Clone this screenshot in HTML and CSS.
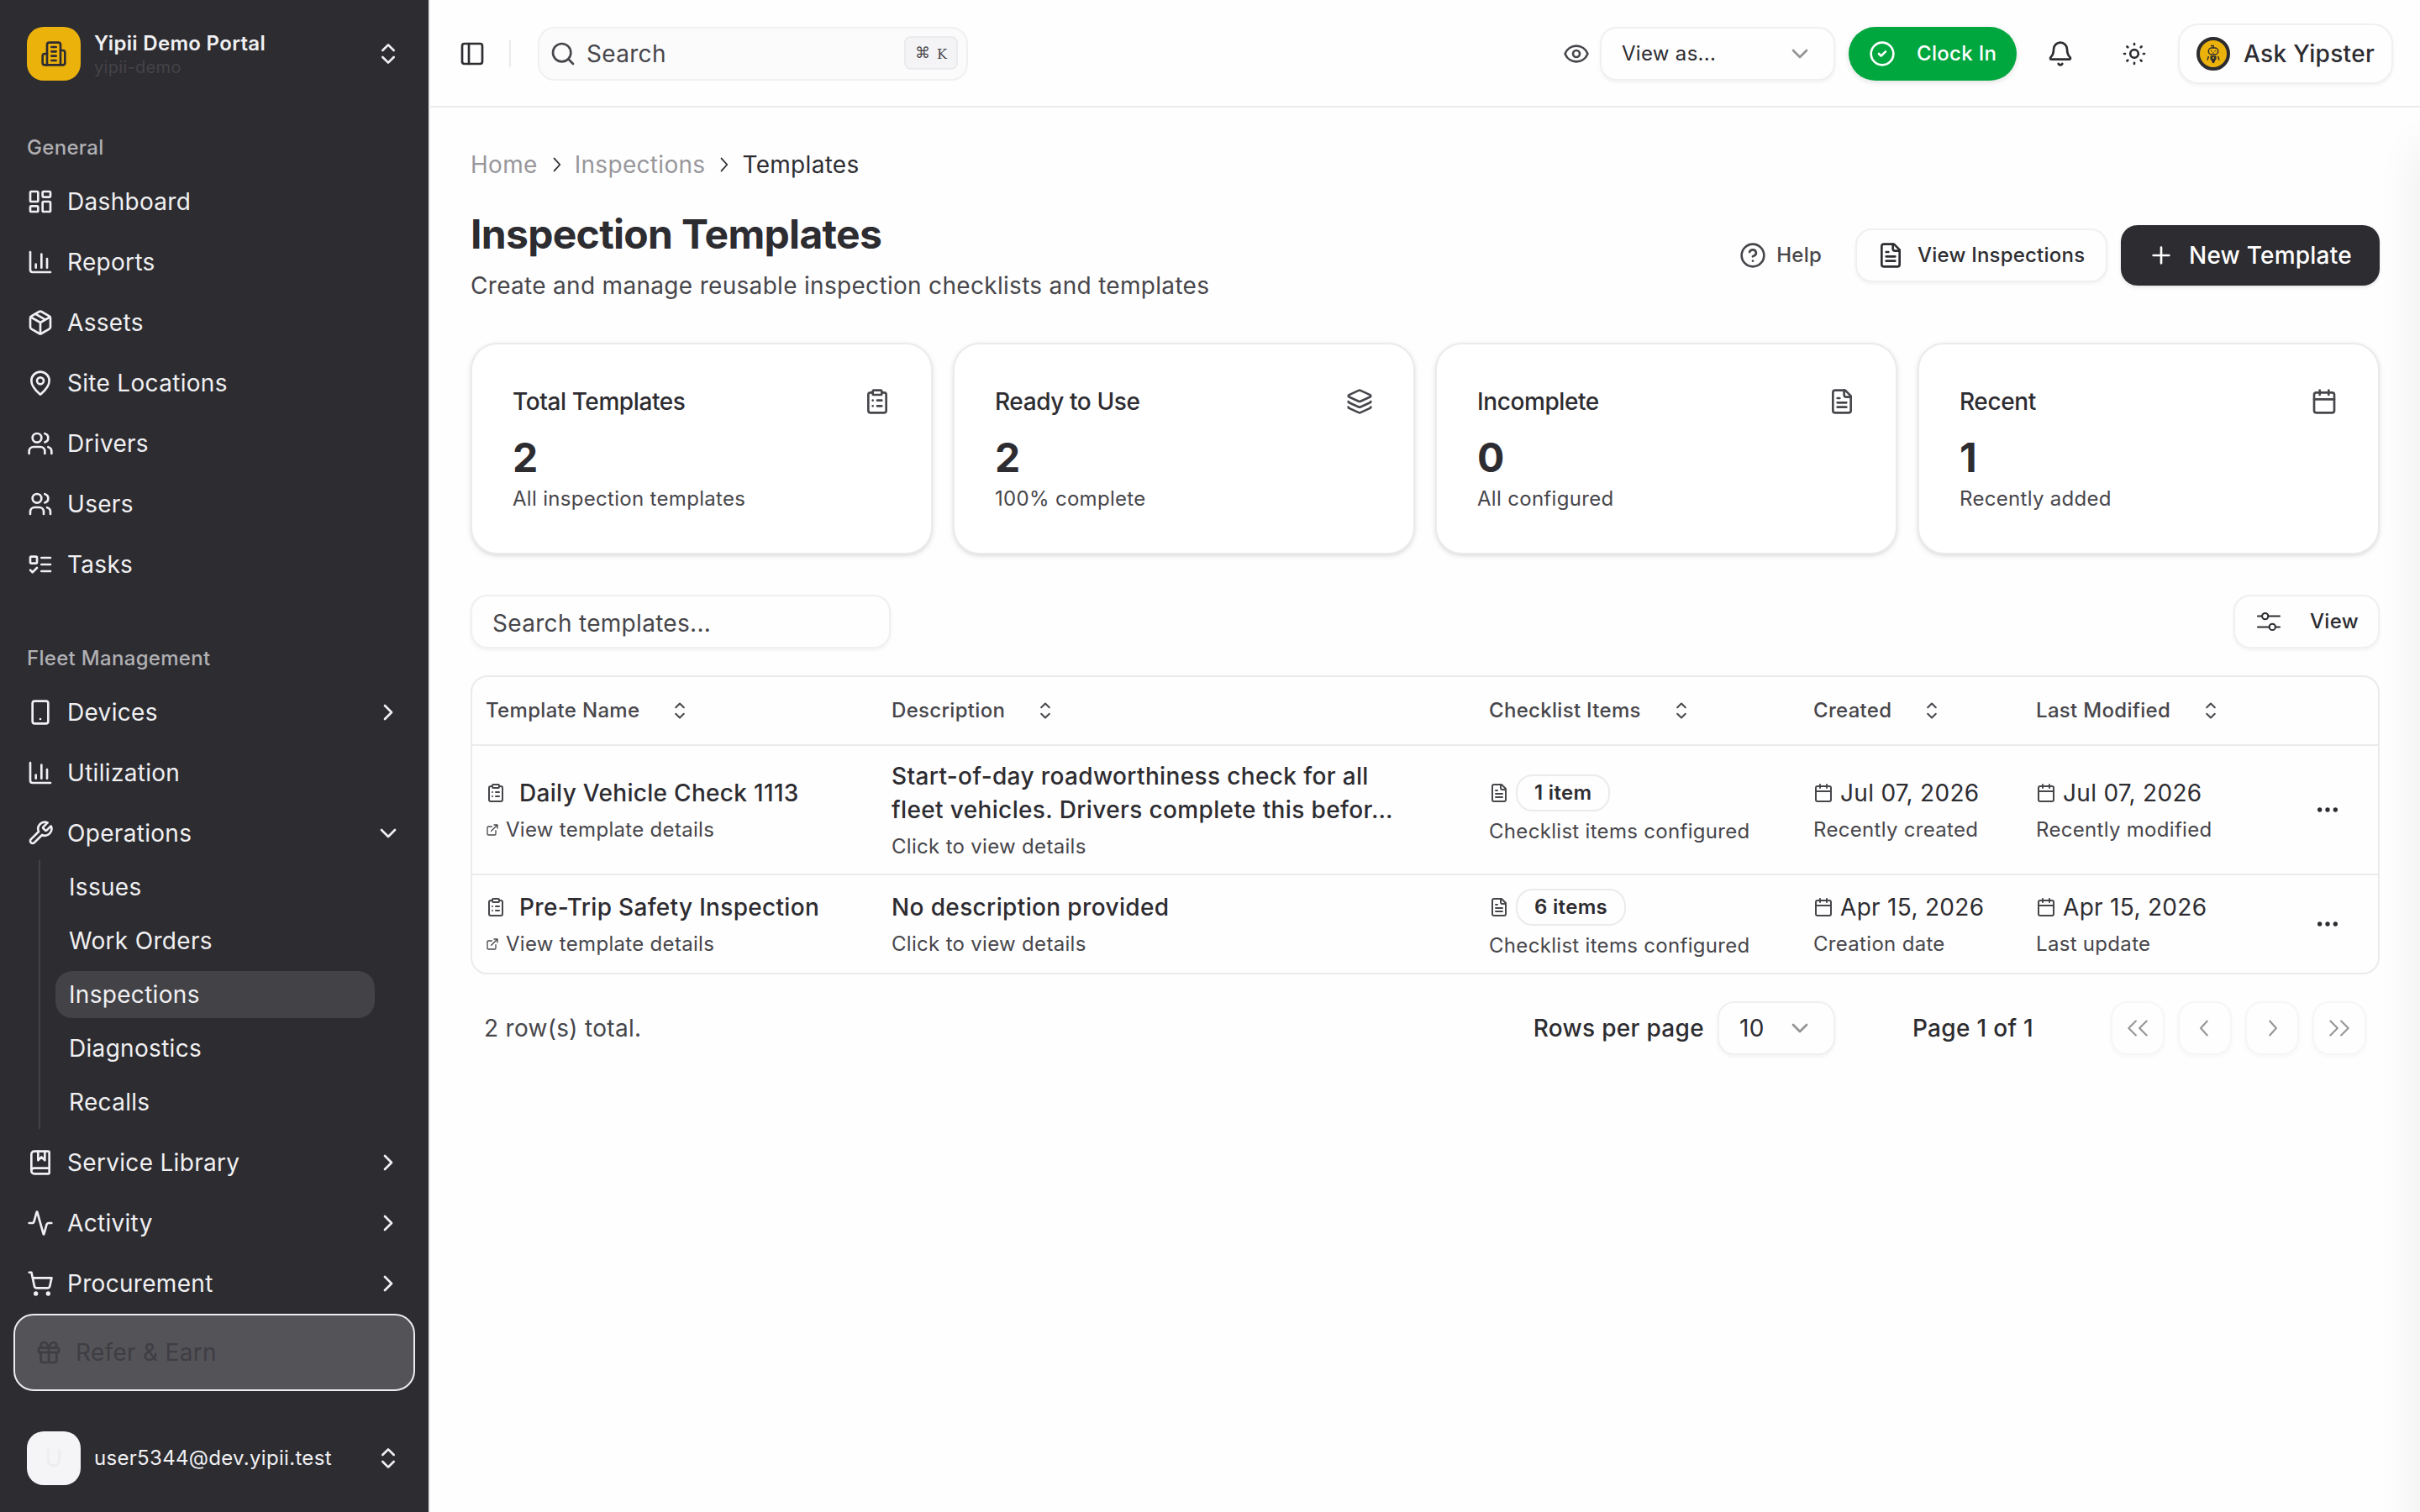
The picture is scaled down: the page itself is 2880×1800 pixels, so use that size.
FILE: index.html
```html
<!DOCTYPE html>
<html lang="en">
<head>
    <meta charset="UTF-8">
    <meta name="viewport" content="width=device-width, initial-scale=1.0">
    <title>Inspection Templates</title>
    <link rel="stylesheet" href="styles.css">
</head>
<body>

    <!-- Icon sprite -->
    <svg class="sprite" xmlns="http://www.w3.org/2000/svg">
        <symbol id="i-building" viewBox="0 0 24 24"><path d="M6 22V4a2 2 0 0 1 2-2h8a2 2 0 0 1 2 2v18Z"/><path d="M6 12H4a2 2 0 0 0-2 2v6a2 2 0 0 0 2 2h2"/><path d="M18 9h2a2 2 0 0 1 2 2v9a2 2 0 0 1-2 2h-2"/><path d="M10 6h4M10 10h4M10 14h4M10 18h4"/></symbol>
        <symbol id="i-updown" viewBox="0 0 24 24"><path d="m7 15 5 5 5-5M7 9l5-5 5 5"/></symbol>
        <symbol id="i-right" viewBox="0 0 24 24"><path d="m9 18 6-6-6-6"/></symbol>
        <symbol id="i-down" viewBox="0 0 24 24"><path d="m6 9 6 6 6-6"/></symbol>
        <symbol id="i-dashboard" viewBox="0 0 24 24"><rect width="7" height="9" x="3" y="3" rx="1"/><rect width="7" height="5" x="14" y="3" rx="1"/><rect width="7" height="9" x="14" y="12" rx="1"/><rect width="7" height="5" x="3" y="16" rx="1"/></symbol>
        <symbol id="i-chart" viewBox="0 0 24 24"><path d="M3 3v16a2 2 0 0 0 2 2h16M18 17V9M13 17V5M8 17v-3"/></symbol>
        <symbol id="i-package" viewBox="0 0 24 24"><path d="M11 21.73a2 2 0 0 0 2 0l7-4A2 2 0 0 0 21 16V8a2 2 0 0 0-1-1.73l-7-4a2 2 0 0 0-2 0l-7 4A2 2 0 0 0 3 8v8a2 2 0 0 0 1 1.73z"/><path d="M12 22V12M3.3 7l8.7 5 8.7-5M7.5 4.27l9 5.15"/></symbol>
        <symbol id="i-pin" viewBox="0 0 24 24"><path d="M20 10c0 4.993-5.539 10.193-7.399 11.799a1 1 0 0 1-1.202 0C9.539 20.193 4 14.993 4 10a8 8 0 0 1 16 0"/><circle cx="12" cy="10" r="3"/></symbol>
        <symbol id="i-drivers" viewBox="0 0 24 24"><path d="M16 21v-2a4 4 0 0 0-4-4H6a4 4 0 0 0-4 4v2"/><circle cx="9" cy="7" r="4"/><path d="M22 21v-2a4 4 0 0 0-3-3.87M16 3.13a4 4 0 0 1 0 7.75"/></symbol>
        <symbol id="i-users" viewBox="0 0 24 24"><circle cx="9" cy="7" r="4"/><path d="M3 21v-2a4 4 0 0 1 4-4h4a4 4 0 0 1 4 4v2M16 3.13a4 4 0 0 1 0 7.75M21 21v-2a4 4 0 0 0-3-3.85"/></symbol>
        <symbol id="i-tasks" viewBox="0 0 24 24"><rect x="3" y="5" width="6" height="6" rx="1"/><path d="m3 17 2 2 4-4M13 6h8M13 12h8M13 18h8"/></symbol>
        <symbol id="i-device" viewBox="0 0 24 24"><rect width="14" height="20" x="5" y="2" rx="2"/><path d="M12 18h.01"/></symbol>
        <symbol id="i-wrench" viewBox="0 0 24 24"><path d="M14.7 6.3a1 1 0 0 0 0 1.4l1.6 1.6a1 1 0 0 0 1.4 0l3.77-3.77a6 6 0 0 1-7.94 7.94l-6.91 6.91a2.12 2.12 0 0 1-3-3l6.91-6.91a6 6 0 0 1 7.94-7.94l-3.76 3.76z"/></symbol>
        <symbol id="i-book" viewBox="0 0 24 24"><path d="M10 2v8l3-3 3 3V2"/><path d="M4 19.5v-15A2.5 2.5 0 0 1 6.5 2H19a1 1 0 0 1 1 1v18a1 1 0 0 1-1 1H6.5a1 1 0 0 1 0-5H20"/></symbol>
        <symbol id="i-activity" viewBox="0 0 24 24"><path d="M22 12h-2.48a2 2 0 0 0-1.93 1.46l-2.35 8.36a.25.25 0 0 1-.48 0L9.24 2.18a.25.25 0 0 0-.48 0l-2.35 8.36A2 2 0 0 1 4.49 12H2"/></symbol>
        <symbol id="i-cart" viewBox="0 0 24 24"><circle cx="8" cy="21" r="1"/><circle cx="19" cy="21" r="1"/><path d="M2.05 2.05h2l2.66 12.42a2 2 0 0 0 2 1.58h9.78a2 2 0 0 0 1.95-1.57l1.65-7.43H5.12"/></symbol>
        <symbol id="i-gift" viewBox="0 0 24 24"><rect x="3" y="8" width="18" height="4" rx="1"/><path d="M12 8v13M19 12v7a2 2 0 0 1-2 2H7a2 2 0 0 1-2-2v-7"/><path d="M7.5 8a2.5 2.5 0 0 1 0-5A4.8 8 0 0 1 12 8a4.8 8 0 0 1 4.5-5 2.5 2.5 0 0 1 0 5"/></symbol>
        <symbol id="i-panel" viewBox="0 0 24 24"><rect width="18" height="18" x="3" y="3" rx="2"/><path d="M9 3v18"/></symbol>
        <symbol id="i-search" viewBox="0 0 24 24"><circle cx="11" cy="11" r="8"/><path d="m21 21-4.3-4.3"/></symbol>
        <symbol id="i-eye" viewBox="0 0 24 24"><path d="M2.062 12.348a1 1 0 0 1 0-.696 10.75 10.75 0 0 1 19.876 0 1 1 0 0 1 0 .696 10.75 10.75 0 0 1-19.876 0"/><circle cx="12" cy="12" r="3"/></symbol>
        <symbol id="i-check" viewBox="0 0 24 24"><circle cx="12" cy="12" r="10"/><path d="m9 12 2 2 4-4"/></symbol>
        <symbol id="i-bell" viewBox="0 0 24 24"><path d="M10.268 21a2 2 0 0 0 3.464 0"/><path d="M3.262 15.326A1 1 0 0 0 4 17h16a1 1 0 0 0 .74-1.673C19.41 13.956 18 12.499 18 8A6 6 0 0 0 6 8c0 4.499-1.411 5.956-2.738 7.326"/></symbol>
        <symbol id="i-sun" viewBox="0 0 24 24"><circle cx="12" cy="12" r="3.6"/><path d="M12 3v.8M12 20.2v.8M3 12h.8M20.2 12h.8M5.6 5.6l.6.6M17.8 17.8l.6.6M18.4 5.6l-.6.6M6.2 17.8l-.6.6"/></symbol>
        <symbol id="i-help" viewBox="0 0 24 24"><circle cx="12" cy="12" r="10"/><path d="M9.09 9a3 3 0 0 1 5.83 1c0 2-3 3-3 3M12 17h.01"/></symbol>
        <symbol id="i-file" viewBox="0 0 24 24"><path d="M15 2H6a2 2 0 0 0-2 2v16a2 2 0 0 0 2 2h12a2 2 0 0 0 2-2V7Z"/><path d="M14 2v4a2 2 0 0 0 2 2h4M10 9H8M16 13H8M16 17H8"/></symbol>
        <symbol id="i-plus" viewBox="0 0 24 24"><path d="M5 12h14M12 5v14"/></symbol>
        <symbol id="i-clipboard" viewBox="0 0 24 24"><rect width="8" height="4" x="8" y="2" rx="1"/><path d="M16 4h2a2 2 0 0 1 2 2v14a2 2 0 0 1-2 2H6a2 2 0 0 1-2-2V6a2 2 0 0 1 2-2h2M12 11h4M12 16h4M8 11h.01M8 16h.01"/></symbol>
        <symbol id="i-layers" viewBox="0 0 24 24"><path d="M12.83 2.18a2 2 0 0 0-1.66 0L2.6 6.08a1 1 0 0 0 0 1.83l8.58 3.91a2 2 0 0 0 1.66 0l8.58-3.9a1 1 0 0 0 0-1.83z"/><path d="M2 12a1 1 0 0 0 .58.91l8.6 3.91a2 2 0 0 0 1.65 0l8.58-3.9A1 1 0 0 0 22 12"/><path d="M2 17a1 1 0 0 0 .58.91l8.6 3.91a2 2 0 0 0 1.65 0l8.58-3.9A1 1 0 0 0 22 17"/></symbol>
        <symbol id="i-calendar" viewBox="0 0 24 24"><path d="M8 2v4M16 2v4M3 10h18"/><rect width="18" height="18" x="3" y="4" rx="2"/></symbol>
        <symbol id="i-external" viewBox="0 0 24 24"><path d="M15 3h6v6M10 14 21 3M18 13v6a2 2 0 0 1-2 2H5a2 2 0 0 1-2-2V8a2 2 0 0 1 2-2h6"/></symbol>
        <symbol id="i-dots" viewBox="0 0 24 24"><circle cx="12" cy="12" r="1"/><circle cx="19" cy="12" r="1"/><circle cx="5" cy="12" r="1"/></symbol>
        <!-- 15px grid -->
        <symbol id="i-mixer" viewBox="0 0 15 15"><circle cx="5.5" cy="4.5" r="1.7"/><circle cx="9.5" cy="10.5" r="1.7"/><path d="M1.4 4.5h2.4M7.2 4.5h6.4M1.4 10.5h6.4M11.2 10.5h2.4"/></symbol>
        <symbol id="i-sort" viewBox="0 0 15 15"><path d="M5.25 5.75 7.5 3.5l2.25 2.25M5.25 9.25 7.5 11.5l2.25-2.25"/></symbol>
        <symbol id="i-prev" viewBox="0 0 15 15"><path d="M8.8 3.5l-3.6 4 3.6 4"/></symbol>
        <symbol id="i-next" viewBox="0 0 15 15"><path d="M6.2 3.5l3.6 4-3.6 4"/></symbol>
        <symbol id="i-first" viewBox="0 0 15 15"><path d="M6.5 3.5l-4 4 4 4M12.5 3.5l-4 4 4 4"/></symbol>
        <symbol id="i-last" viewBox="0 0 15 15"><path d="M2.5 3.5l4 4-4 4M8.5 3.5l4 4-4 4"/></symbol>
    </svg>

    <!-- Sidebar -->
    <aside class="sidebar">
        <div class="brand">
            <div class="brand-logo"><svg class="icon"><use href="#i-building"/></svg></div>
            <div class="brand-text">
                <strong>Yipii Demo Portal</strong>
                <span>yipii-demo</span>
            </div>
            <svg class="icon"><use href="#i-updown"/></svg>
        </div>

        <div class="nav-scroll">
            <nav class="nav-group">
                <div class="nav-label">General</div>
                <a class="nav-item"><svg class="icon"><use href="#i-dashboard"/></svg><span>Dashboard</span></a>
                <a class="nav-item"><svg class="icon"><use href="#i-chart"/></svg><span>Reports</span></a>
                <a class="nav-item"><svg class="icon"><use href="#i-package"/></svg><span>Assets</span></a>
                <a class="nav-item"><svg class="icon"><use href="#i-pin"/></svg><span>Site Locations</span></a>
                <a class="nav-item"><svg class="icon"><use href="#i-drivers"/></svg><span>Drivers</span></a>
                <a class="nav-item"><svg class="icon"><use href="#i-users"/></svg><span>Users</span></a>
                <a class="nav-item"><svg class="icon"><use href="#i-tasks"/></svg><span>Tasks</span></a>
            </nav>

            <nav class="nav-group">
                <div class="nav-label">Fleet Management</div>
                <a class="nav-item"><svg class="icon"><use href="#i-device"/></svg><span>Devices</span><svg class="icon"><use href="#i-right"/></svg></a>
                <a class="nav-item"><svg class="icon"><use href="#i-chart"/></svg><span>Utilization</span></a>
                <a class="nav-item open"><svg class="icon"><use href="#i-wrench"/></svg><span>Operations</span><svg class="icon"><use href="#i-down"/></svg></a>
                <div class="subnav">
                    <a>Issues</a>
                    <a>Work Orders</a>
                    <a class="active">Inspections</a>
                    <a>Diagnostics</a>
                    <a>Recalls</a>
                </div>
                <a class="nav-item"><svg class="icon"><use href="#i-book"/></svg><span>Service Library</span><svg class="icon"><use href="#i-right"/></svg></a>
                <a class="nav-item"><svg class="icon"><use href="#i-activity"/></svg><span>Activity</span><svg class="icon"><use href="#i-right"/></svg></a>
                <a class="nav-item"><svg class="icon"><use href="#i-cart"/></svg><span>Procurement</span><svg class="icon"><use href="#i-right"/></svg></a>
            </nav>
        </div>

        <a class="refer"><svg class="icon"><use href="#i-gift"/></svg><span>Refer &amp; Earn</span></a>

        <div class="user">
            <div class="user-avatar">U</div>
            <span>user5344@dev.yipii.test</span>
            <svg class="icon"><use href="#i-updown"/></svg>
        </div>
    </aside>

    <main class="main">
        <!-- Top bar -->
        <header class="topbar">
            <svg class="icon"><use href="#i-panel"/></svg>
            <div class="divider"></div>
            <div class="search">
                <svg class="icon"><use href="#i-search"/></svg>
                <span>Search</span>
                <kbd><span class="cmd">⌘</span><span class="key">K</span></kbd>
            </div>
            <div class="topbar-right">
                <svg class="icon eye"><use href="#i-eye"/></svg>
                <div class="box select-view"><span>View as...</span><svg class="icon faded"><use href="#i-down"/></svg></div>
                <button class="clock"><svg class="icon"><use href="#i-check"/></svg>Clock In</button>
                <button class="icon-btn"><svg class="icon"><use href="#i-bell"/></svg></button>
                <button class="icon-btn"><svg class="icon"><use href="#i-sun"/></svg></button>
                <button class="box ask">
                    <svg class="bot" viewBox="0 0 40 40">
                        <circle class="bot-ring" cx="20" cy="20" r="18"/>
                        <path class="bot-line" d="M20 13v-2.5h-3"/>
                        <rect class="bot-line" x="14.3" y="13" width="11.4" height="8" rx="4"/>
                        <path class="bot-line thin" d="M17 16.3l1.6.8M23 16.3l-1.6.8M19 19h2"/>
                        <path class="bot-fill" d="M16.5 22.5h7v4l-1.8 2.2V30L20 31.4 18.3 30v-1.3l-1.8-2.2z"/>
                        <path class="bot-line" d="M14.4 23l-1.4 4.6M25.6 23l1.4 4.6"/>
                        <circle class="bot-dot" cx="20" cy="25" r="1.1"/>
                    </svg>
                    Ask Yipster
                </button>
            </div>
        </header>

        <div class="content">
            <div class="breadcrumb">
                <a>Home</a>
                <svg class="icon radix"><use href="#i-next"/></svg>
                <a>Inspections</a>
                <svg class="icon radix"><use href="#i-next"/></svg>
                <span>Templates</span>
            </div>

            <div class="page-head">
                <div>
                    <h1>Inspection Templates</h1>
                    <p>Create and manage reusable inspection checklists and templates</p>
                </div>
                <div class="actions">
                    <button class="help"><svg class="icon"><use href="#i-help"/></svg>Help</button>
                    <button class="box view-insp"><svg class="icon"><use href="#i-file"/></svg>View Inspections</button>
                    <button class="primary"><svg class="icon"><use href="#i-plus"/></svg>New Template</button>
                </div>
            </div>

            <!-- Stats -->
            <div class="stats">
                <div class="card">
                    <div class="card-head">Total Templates<svg class="icon"><use href="#i-clipboard"/></svg></div>
                    <div class="value">2</div>
                    <div class="note">All inspection templates</div>
                </div>
                <div class="card">
                    <div class="card-head">Ready to Use<svg class="icon"><use href="#i-layers"/></svg></div>
                    <div class="value">2</div>
                    <div class="note">100% complete</div>
                </div>
                <div class="card">
                    <div class="card-head">Incomplete<svg class="icon"><use href="#i-file"/></svg></div>
                    <div class="value">0</div>
                    <div class="note">All configured</div>
                </div>
                <div class="card">
                    <div class="card-head">Recent<svg class="icon"><use href="#i-calendar"/></svg></div>
                    <div class="value">1</div>
                    <div class="note">Recently added</div>
                </div>
            </div>

            <div class="toolbar">
                <div class="box filter">Search templates...</div>
                <button class="box view-btn"><svg class="icon radix"><use href="#i-mixer"/></svg>View</button>
            </div>

            <!-- Templates table -->
            <div class="table">
                <div class="row head">
                    <div class="th">Template Name<svg class="icon radix"><use href="#i-sort"/></svg></div>
                    <div class="th">Description<svg class="icon radix"><use href="#i-sort"/></svg></div>
                    <div class="th">Checklist Items<svg class="icon radix"><use href="#i-sort"/></svg></div>
                    <div class="th">Created<svg class="icon radix"><use href="#i-sort"/></svg></div>
                    <div class="th">Last Modified<svg class="icon radix"><use href="#i-sort"/></svg></div>
                    <div class="th"></div>
                </div>
                <div class="row">
                    <div class="td">
                        <div class="line name"><svg class="icon"><use href="#i-clipboard"/></svg>Daily Vehicle Check 1113</div>
                        <div class="sub link"><svg class="icon"><use href="#i-external"/></svg>View template details</div>
                    </div>
                    <div class="td">
                        <div class="desc">Start-of-day roadworthiness check for all<br>fleet vehicles. Drivers complete this befor…</div>
                        <div class="sub">Click to view details</div>
                    </div>
                    <div class="td">
                        <div class="line items"><svg class="icon"><use href="#i-file"/></svg><span class="badge">1 item</span></div>
                        <div class="sub">Checklist items configured</div>
                    </div>
                    <div class="td">
                        <div class="line date"><svg class="icon"><use href="#i-calendar"/></svg>Jul 07, 2026</div>
                        <div class="sub">Recently created</div>
                    </div>
                    <div class="td">
                        <div class="line date"><svg class="icon"><use href="#i-calendar"/></svg>Jul 07, 2026</div>
                        <div class="sub">Recently modified</div>
                    </div>
                    <div class="td more"><svg class="icon"><use href="#i-dots"/></svg></div>
                </div>
                <div class="row">
                    <div class="td">
                        <div class="line name"><svg class="icon"><use href="#i-clipboard"/></svg>Pre-Trip Safety Inspection</div>
                        <div class="sub link"><svg class="icon"><use href="#i-external"/></svg>View template details</div>
                    </div>
                    <div class="td">
                        <div class="desc">No description provided</div>
                        <div class="sub">Click to view details</div>
                    </div>
                    <div class="td">
                        <div class="line items"><svg class="icon"><use href="#i-file"/></svg><span class="badge">6 items</span></div>
                        <div class="sub">Checklist items configured</div>
                    </div>
                    <div class="td">
                        <div class="line date"><svg class="icon"><use href="#i-calendar"/></svg>Apr 15, 2026</div>
                        <div class="sub">Creation date</div>
                    </div>
                    <div class="td">
                        <div class="line date"><svg class="icon"><use href="#i-calendar"/></svg>Apr 15, 2026</div>
                        <div class="sub">Last update</div>
                    </div>
                    <div class="td more"><svg class="icon"><use href="#i-dots"/></svg></div>
                </div>
            </div>

            <!-- Pagination -->
            <div class="pager">
                <div class="total">2 row(s) total.</div>
                <div class="per-page">Rows per page</div>
                <div class="box size-select"><span>10</span><svg class="icon faded"><use href="#i-down"/></svg></div>
                <div class="page-num">Page 1 of 1</div>
                <div class="page-btns">
                    <button class="box" disabled><svg class="icon radix"><use href="#i-first"/></svg></button>
                    <button class="box" disabled><svg class="icon radix"><use href="#i-prev"/></svg></button>
                    <button class="box" disabled><svg class="icon radix"><use href="#i-next"/></svg></button>
                    <button class="box" disabled><svg class="icon radix"><use href="#i-last"/></svg></button>
                </div>
            </div>
        </div>

        <!-- closed chat drawer, only its shadow reaches the page -->
        <div class="drawer"></div>
    </main>

</body>
</html>
```
FILE: styles.css
```css
:root {
    --ink: #2d2c31;
    --muted: #47464b;
    --line: #ebebed;
    --soft: #f0f0f2;
}

* {
    box-sizing: border-box;
}

body {
    margin: 0;
    height: 100vh;
    display: flex;
    overflow: hidden;
    background: #fefefe;
    color: var(--ink);
    font-family: Inter, sans-serif;
    font-size: 28px;
    line-height: 40px;
    letter-spacing: 0.011em;
}

button {
    font: inherit;
    letter-spacing: inherit;
    color: inherit;
    border: none;
    background: none;
    padding: 0;
    display: flex;
    align-items: center;
}

.sprite {
    display: none;
}
.icon {
    width: 32px;
    height: 32px;
    flex: none;
    fill: none;
    stroke: currentColor;
    stroke-width: 2;
    stroke-linecap: round;
    stroke-linejoin: round;
}
.icon.radix {
    stroke-width: 0.95;
}
.icon.faded {
    opacity: 0.5;
}

/* Outlined control */
.box {
    height: 64px;
    display: flex;
    align-items: center;
    border: 2px solid var(--soft);
    border-radius: 20px;
    background: #fefefe;
    box-shadow: 0 2px 4px rgba(0,0,0,0.05);
}

/* Sidebar */
.sidebar {
    width: 512px;
    flex: none;
    display: flex;
    flex-direction: column;
    background: var(--ink);
    color: #f0f0f2;
    border-right: 2px solid var(--line);
}
.brand {
    height: 128px;
    flex: none;
    padding: 0 32px;
    display: flex;
    align-items: center;
    gap: 16px;
}
.brand-logo {
    width: 64px;
    height: 64px;
    border-radius: 20px;
    background: #ecb20c;
    color: var(--ink);
    display: flex;
    align-items: center;
    justify-content: center;
}
.brand-text {
    flex: 1;
    display: flex;
    flex-direction: column;
    font-size: 24px;
    line-height: 30px;
    padding-top: 1px;
}
.brand-text strong {
    font-weight: 600;
}
.brand-text span {
    font-size: 20px;
    line-height: 26px;
    color: #444348;
}
.nav-scroll {
    flex: 1;
    min-height: 0;
    overflow: hidden;
    display: flex;
    flex-direction: column;
    gap: 16px;
}
.nav-group {
    padding: 16px;
    display: flex;
    flex-direction: column;
    gap: 8px;
}
.nav-label {
    height: 64px;
    margin-bottom: -8px;
    padding: 0 16px;
    font-size: 24px;
    line-height: 64px;
    font-weight: 500;
    color: #b0b0b3;
}
.nav-item {
    height: 64px;
    padding: 0 16px;
    display: flex;
    align-items: center;
    gap: 16px;
}
.nav-item span {
    flex: 1;
}
.nav-item.open {
    margin-bottom: -8px;
}
.subnav {
    margin: 0 44px 0 30px;
    padding: 4px 4px 4px 18px;
    border-left: 2px solid #434247;
    display: flex;
    flex-direction: column;
    gap: 8px;
}
.subnav a {
    height: 56px;
    line-height: 56px;
    padding: 0 16px;
    border-radius: 20px;
}
.subnav .active {
    background: #434247;
}
.refer {
    height: 92px;
    margin: 0 16px 16px;
    padding: 0 24px;
    display: flex;
    align-items: center;
    gap: 16px;
    border: 2px solid #ededf0;
    border-radius: 24px;
    background: #545358;
    color: #3f3e43;
}
.user {
    height: 128px;
    padding: 0 32px;
    display: flex;
    align-items: center;
    gap: 16px;
    font-size: 24px;
}
.user span {
    flex: 1;
}
.user-avatar {
    width: 64px;
    height: 64px;
    border-radius: 20px;
    background: #f5f5f7;
    color: #ededf0;
    font-size: 28px;
    display: flex;
    align-items: center;
    justify-content: center;
}

/* Top bar */
.main {
    flex: 1;
    min-width: 0;
    position: relative;
    overflow: hidden;
}
.topbar {
    height: 128px;
    padding: 2px 32px 0 34px;
    display: flex;
    align-items: center;
    border-bottom: 2px solid var(--line);
}
.divider {
    width: 2px;
    height: 32px;
    margin: 0 32px 0 28px;
    background: var(--line);
}
.search {
    width: 512px;
    height: 64px;
    padding: 0 10px 0 12px;
    display: flex;
    align-items: center;
    gap: 12px;
    border: 2px solid var(--soft);
    border-radius: 20px;
    background: #fbfbfc;
    color: var(--muted);
}
.search > span {
    flex: 1;
}
kbd {
    width: 64px;
    height: 40px;
    margin-top: -2px;
    display: flex;
    align-items: center;
    justify-content: center;
    gap: 8px;
    border: 2px solid var(--line);
    border-radius: 8px;
    background: #f4f4f6;
    letter-spacing: 0;
}
.cmd {
    font-family: "DejaVu Sans", sans-serif;
    font-size: 18px;
}
.key {
    padding-top: 3px;
    font-family: "DejaVu Serif", serif;
    font-size: 16px;
}
.topbar-right {
    margin-left: auto;
    display: flex;
    align-items: center;
    gap: 16px;
}
.eye {
    margin-right: -4px;
    color: var(--muted);
}
.select-view {
    width: 280px;
    padding: 0 24px;
    font-size: 24px;
    justify-content: space-between;
}
.clock {
    width: 200px;
    height: 64px;
    padding-left: 24px;
    gap: 25px;
    border-radius: 32px;
    background: #00a63e;
    color: #fff;
    font-size: 24px;
    font-weight: 500;
    box-shadow: 0 2px 6px rgba(0,0,0,0.12);
}
.icon-btn {
    width: 72px;
    height: 72px;
    justify-content: center;
}
.ask {
    width: 256px;
    height: 72px;
    padding-left: 20px;
    gap: 16px;
    border-radius: 24px;
    font-weight: 500;
    white-space: nowrap;
}
.bot {
    width: 40px;
    height: 40px;
    flex: none;
}
.bot-ring {
    fill: #ecb20c;
    stroke: var(--ink);
    stroke-width: 4;
}
.bot-line {
    fill: none;
    stroke: var(--ink);
    stroke-width: 1.5;
}
.bot-line.thin {
    stroke-width: 1;
}
.bot-fill {
    fill: var(--ink);
}
.bot-dot {
    fill: #ecb20c;
}

/* Page */
.content {
    padding: 48px;
}
.breadcrumb {
    display: flex;
    align-items: center;
    gap: 8px;
    margin-bottom: 31px;
}
.breadcrumb a {
    color: #98979b;
}
.breadcrumb .icon {
    width: 28px;
    height: 28px;
}
.page-head {
    display: flex;
    justify-content: space-between;
    align-items: center;
    margin-bottom: 48px;
}
h1 {
    margin: 0 0 9px;
    font-size: 48px;
    line-height: 64px;
    font-weight: 700;
    letter-spacing: -0.0145em;
}
p {
    margin: 0;
    color: var(--muted);
}
.actions {
    display: flex;
    align-items: center;
    gap: 16px;
    font-size: 24px;
    font-weight: 500;
    letter-spacing: 0.009em;
}
.help {
    padding: 0 24px;
    gap: 12px;
    color: var(--muted);
}
.view-insp {
    width: 300px;
    padding-left: 24px;
    gap: 16px;
}
.primary {
    width: 308px;
    height: 72px;
    padding-left: 32px;
    gap: 17px;
    border-radius: 20px;
    background: var(--ink);
    color: #fff;
    font-size: 28px;
    box-shadow: 0 2px 4px rgba(0,0,0,0.1);
}

.stats {
    display: grid;
    grid-template-columns: repeat(4, 1fr);
    gap: 24px;
    margin-bottom: 48px;
}
.card {
    padding: 48px;
    border: 2px solid var(--line);
    border-radius: 32px;
    background: #fff;
    box-shadow: 0 2px 6px rgba(0,0,0,0.1), 0 2px 4px -2px rgba(0,0,0,0.1);
}
.card-head {
    display: flex;
    justify-content: space-between;
    align-items: center;
    margin-bottom: 15px;
    font-weight: 500;
    letter-spacing: -0.0145em;
}
.card-head .icon {
    color: var(--muted);
}
.value {
    margin-bottom: 1px;
    font-size: 48px;
    line-height: 64px;
    font-weight: 700;
}
.note {
    font-size: 24px;
    line-height: 32px;
    color: var(--muted);
}

.toolbar {
    display: flex;
    justify-content: space-between;
    margin-bottom: 32px;
}
.filter {
    width: 500px;
    padding: 3px 24px 0;
    color: var(--muted);
}
.view-btn {
    width: 174px;
    padding-left: 24px;
    gap: 33px;
    font-size: 24px;
    font-weight: 500;
}

/* Table */
.table {
    border: 2px solid var(--line);
    border-radius: 20px;
    overflow: hidden;
}
.row {
    display: grid;
    grid-template-columns: 483px 711px 386px 265px 315px 1fr;
    align-items: center;
    border-bottom: 2px solid var(--line);
}
.row:last-child {
    border-bottom: none;
}
.head {
    height: 82px;
}
.th {
    padding: 0 16px;
    display: flex;
    align-items: center;
    gap: 32px;
    font-size: 24px;
    font-weight: 500;
    color: var(--muted);
}
.td {
    padding: 16px;
}
.line {
    display: flex;
    align-items: center;
    gap: 8px;
}
.line .icon {
    width: 24px;
    height: 24px;
    color: var(--muted);
}
.name {
    gap: 16px;
    font-weight: 500;
}
.desc {
    font-weight: 500;
    letter-spacing: 0.013em;
}
.sub {
    margin-top: 8px;
    font-size: 24px;
    line-height: 32px;
    color: var(--muted);
}
.link {
    display: flex;
    align-items: center;
    gap: 8px;
}
.link .icon {
    width: 16px;
    height: 16px;
}
.badge {
    height: 44px;
    padding: 0 20px;
    border: 2px solid var(--line);
    border-radius: 20px;
    font-size: 24px;
    line-height: 40px;
    font-weight: 600;
}
.more {
    padding-left: 32px;
    display: flex;
}

/* Pagination */
.pager {
    margin-top: 32px;
    padding: 0 16px;
    display: flex;
    align-items: center;
    font-weight: 500;
}
.total {
    flex: 1;
    font-weight: 400;
    color: var(--muted);
}
.size-select {
    width: 140px;
    margin-left: 16px;
    padding: 0 24px;
    justify-content: space-between;
    font-weight: 400;
}
.page-num {
    width: 200px;
    margin: 0 64px;
    text-align: center;
}
.page-btns {
    display: flex;
    gap: 16px;
}
.page-btns .box {
    width: 64px;
    justify-content: center;
    opacity: 0.5;
}

.drawer {
    position: absolute;
    top: 176px;
    left: 100%;
    width: 400px;
    bottom: -40px;
    box-shadow: 0 0 50px rgba(0,0,0,0.08);
}
```
